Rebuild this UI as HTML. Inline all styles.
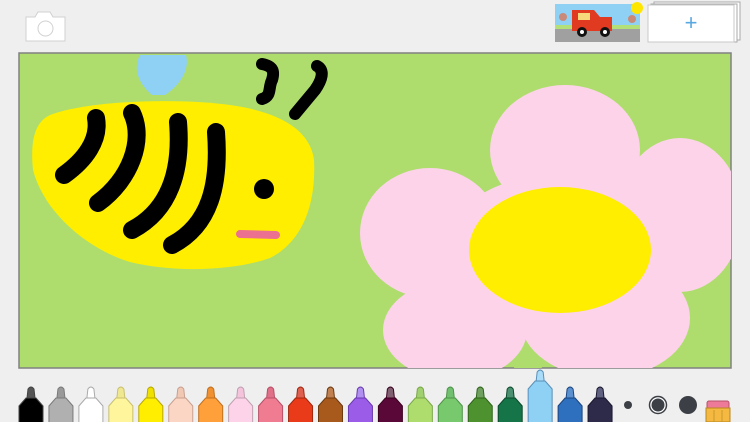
<!DOCTYPE html>
<html><head><style>
html,body{margin:0;padding:0;width:750px;height:422px;overflow:hidden;background:#efefef;font-family:"Liberation Sans",sans-serif}
</style></head><body>
<svg id="s" width="750" height="422" viewBox="0 0 750 422" xmlns="http://www.w3.org/2000/svg" style="position:absolute;left:0;top:0">
<g stroke="#d0d0d0" stroke-width="1" fill="#fff">
<path d="M26 17 h9 l3 -5 h12 l3 5 h12 v24 h-39 z" />
<circle cx="45.5" cy="28.5" r="7.5" fill="#fff"/>
</g>
<rect x="555" y="4" width="85" height="38" fill="#8fd0f5"/>
<rect x="555" y="28" width="85" height="14" fill="#a0a0a0"/>
<rect x="555" y="25" width="85" height="4" fill="#b4e07a"/>
<circle cx="637" cy="8" r="6" fill="#ffe600"/>
<path d="M572 10 h22 l6 7 h12 v14 h-40 z" fill="#e03a20"/>
<rect x="578" y="13" width="12" height="7" fill="#f5d97a"/>
<circle cx="582" cy="32" r="5" fill="#111"/><circle cx="582" cy="32" r="2" fill="#fff"/>
<circle cx="605" cy="32" r="5" fill="#111"/><circle cx="605" cy="32" r="2" fill="#fff"/>
<circle cx="563" cy="17" r="4" fill="#c98a7a"/><circle cx="632" cy="19" r="4" fill="#c98a7a"/>
<rect x="654" y="2" width="86" height="38" fill="#fff" stroke="#aaa"/>
<rect x="651" y="4" width="86" height="38" fill="#fff" stroke="#aaa"/>
<rect x="648" y="5" width="86" height="37" fill="#fff" stroke="#c8c8c8"/>
<text x="691" y="30" font-size="22" fill="#5aa8e0" text-anchor="middle" font-family="Liberation Sans">+</text>
<defs><clipPath id="c"><rect x="19" y="53" width="712" height="315"/></clipPath></defs>
<rect x="19" y="53" width="712" height="315" fill="#aedd6e" stroke="#808080" stroke-width="1.5"/>
<g clip-path="url(#c)">
<path d="M140 55 C132 70 140 85 152 95 L165 95 C180 85 190 70 186 55 Z" fill="#8fd0f5"/>
<path d="M50 115 C90 100 180 98 230 105 C280 112 310 130 314 160 C316 200 305 240 270 258 C230 272 170 272 130 262 C90 250 45 215 33 170 C30 140 35 122 50 115Z" fill="#ffee00"/>
<g stroke="#000" stroke-width="18" stroke-linecap="round" fill="none">
<path d="M96 118 C100 140 85 160 64 175"/>
<path d="M132 113 C145 140 130 180 98 203"/>
<path d="M178 122 C182 170 170 210 132 230"/>
<path d="M216 132 C220 185 210 225 172 245"/>
<path d="M262 64 C272 66 275 70 272 80 C268 88 272 96 262 99" stroke-width="12"/>
<path d="M317 66 C325 70 322 80 315 90 L295 114" stroke-width="12"/>
</g>
<circle cx="264" cy="189" r="10" fill="#000"/>
<path d="M240 234 L276 235" stroke="#ec7090" stroke-width="8" stroke-linecap="round"/>
<g fill="#fdd3ea">
<ellipse cx="565" cy="150" rx="75" ry="65"/>
<ellipse cx="680" cy="215" rx="62" ry="77"/>
<ellipse cx="430" cy="233" rx="70" ry="65"/>
<ellipse cx="455" cy="330" rx="72" ry="50"/>
<ellipse cx="605" cy="318" rx="85" ry="60"/>
<ellipse cx="555" cy="250" rx="110" ry="75"/>
</g>
<path d="M512 372 L525 344 L545 372 Z" fill="#aedd6e"/>
<ellipse cx="560" cy="250" rx="91" ry="63" fill="#ffee00"/>
</g>
<g id="marks"></g>
<circle cx="628" cy="405" r="4" fill="#3c4046"/>
<circle cx="658" cy="405" r="8.5" fill="#fff" stroke="#3c4046" stroke-width="1.5"/>
<circle cx="658" cy="405" r="6.5" fill="#3c4046"/>
<circle cx="688" cy="405" r="9" fill="#3c4046"/>
<rect x="707" y="401" width="22" height="8" rx="2" fill="#ee7a9a" stroke="#b85068"/>
<rect x="706" y="408" width="24" height="14" fill="#f5b840" stroke="#b88820"/>
<line x1="714" y1="410" x2="714" y2="422" stroke="#c99a30"/><line x1="722" y1="410" x2="722" y2="422" stroke="#c99a30"/>
</svg>
<script>
var cols=[["#000","#444","#555"],["#b0b0b0","#7a7a7a","#999"],["#fff","#aaa","#fff"],["#fff59d","#c8c070","#f0e890"],["#ffee00","#b8a800","#f0e000"],["#fcd6c4","#c9a090","#f0c8b4"],["#ffa03a","#c07020","#f09030"],["#fdd3ea","#c0a0b0","#f4c4dc"],["#f07c92","#b85068","#e07088"],["#e93a1a","#a02810","#e06050"],["#a85a1c","#6e3a10","#c08050"],["#9b5ce8","#6a3ab0","#b090f0"],["#5a0838","#3a0020","#806070"],["#aedd6e","#7aa848","#a0d070"],["#78c86e","#4e9448","#70c070"],["#4e9230","#2e6418","#70a060"],["#157548","#0a4a2a","#4a9070"],["#8fd0f5","#5a90b8","#a8dcf8"],["#2e6fbe","#1a4680","#5a90d0"],["#2e2a4a","#1a1830","#606080"]];
var h="";
for(var i=0;i<cols.length;i++){var cx=31+i*29.95;var sel=i==17;var t=sel?381:398;var c=cols[i];
h+='<path d="M'+(cx-4)+' '+t+' L'+(cx-3)+' '+(t-9)+' Q'+cx+' '+(t-13)+' '+(cx+3)+' '+(t-9)+' L'+(cx+4)+' '+t+'Z" fill="'+c[2]+'" stroke="'+c[1]+'"/>';
h+='<path d="M'+(cx-12)+' 423 V'+(t+8)+' L'+(cx-5)+' '+t+' H'+(cx+5)+' L'+(cx+12)+' '+(t+8)+' V423Z" fill="'+c[0]+'" stroke="'+c[1]+'"/>';}
document.getElementById("marks").innerHTML=h;
</script>
</body></html>
